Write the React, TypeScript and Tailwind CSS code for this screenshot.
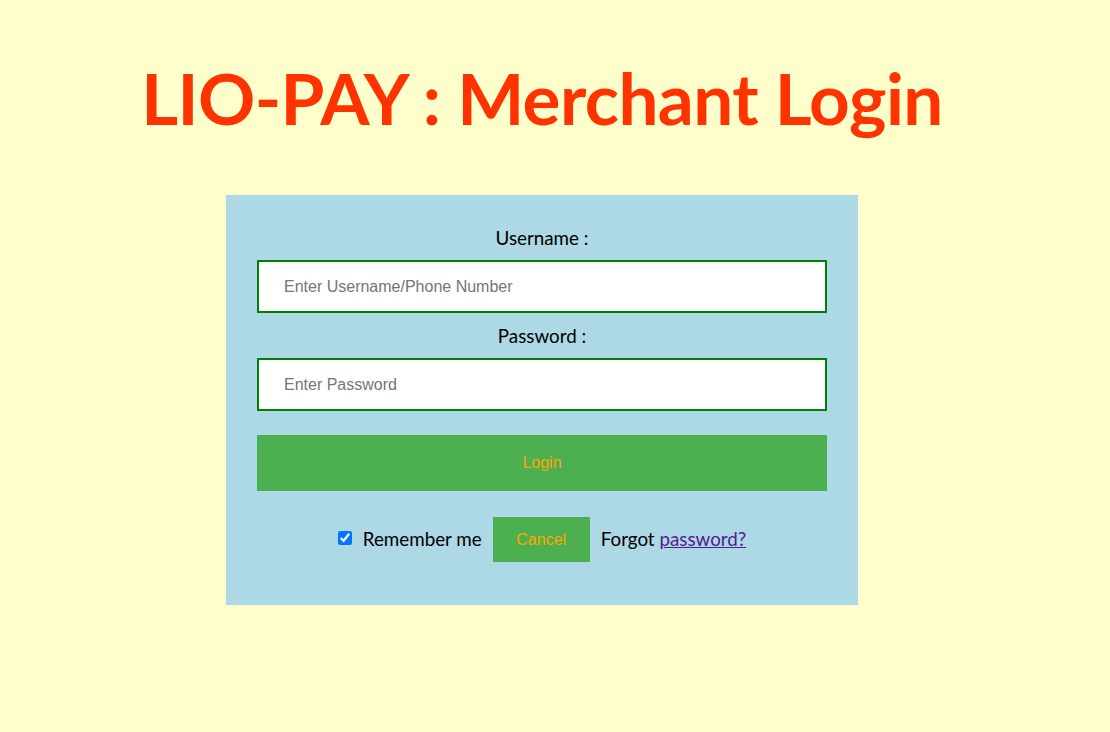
export default function App() {
  return (
    <div className="min-h-[732px] w-full bg-[#FFFFCC]">
      <div className="w-[1084px] flex flex-col items-center">
        <h1 className="mt-[54px] text-[71px] leading-[88px] font-bold text-[#FF3300] font-['Lato',sans-serif] tracking-[-0.6px]">
          LIO-PAY : Merchant Login
        </h1>
        <form
          onSubmit={(e) => e.preventDefault()}
          className="mt-[53px] w-[632px] h-[410px] bg-[#ADD8E6] px-[31px] pt-[30px] flex flex-col items-center font-['Lato',sans-serif] text-[18.8px] text-black"
        >
          <label className="h-[26px] leading-[26px]">Username :</label>
          <input
            type="text"
            placeholder="Enter Username/Phone Number"
            className="mt-[9px] w-full h-[53px] border-2 border-[#008000] bg-white px-[25px] text-[16px] font-['Liberation_Sans',sans-serif] placeholder:text-[#757575] outline-none"
          />
          <label className="mt-[10px] h-[26px] leading-[26px]">Password :</label>
          <input
            type="password"
            placeholder="Enter Password"
            className="mt-[9px] w-full h-[53px] border-2 border-[#008000] bg-white px-[25px] text-[16px] font-['Liberation_Sans',sans-serif] placeholder:text-[#757575] outline-none"
          />
          <button
            type="submit"
            className="mt-[24px] w-full h-[56px] bg-[#4CAF50] text-[#FFA500] text-[16px] font-['Liberation_Sans',sans-serif]"
          >
            Login
          </button>
          <div className="mt-[26px] flex items-center">
            <input type="checkbox" defaultChecked className="w-[14px] h-[14px] mr-[11px] accent-[#0075FF] -translate-y-[2px]" />
            <span>Remember me</span>
            <button
              type="button"
              className="ml-[11px] w-[97px] h-[45px] bg-[#4CAF50] text-[#FFA500] text-[16px] font-['Liberation_Sans',sans-serif]"
            >
              Cancel
            </button>
            <span className="ml-[11px]">
              Forgot{" "}
              <a href="#" className="text-[#551A8B] underline">
                password?
              </a>
            </span>
          </div>
        </form>
      </div>
    </div>
  );
}
